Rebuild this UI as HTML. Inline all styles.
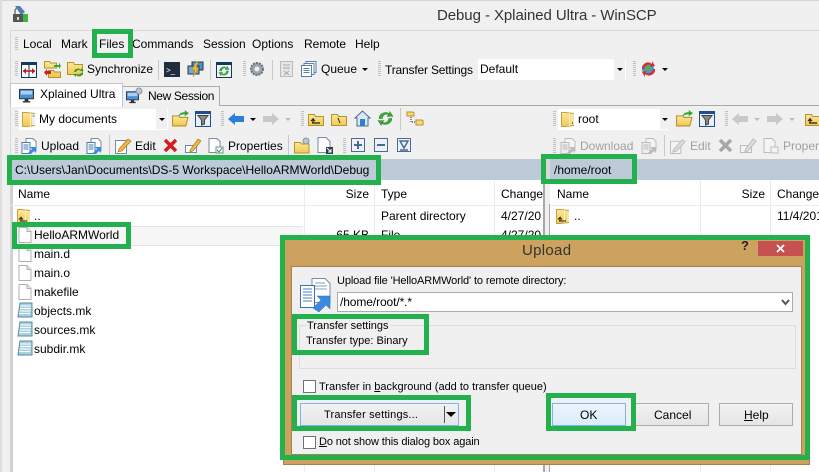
<!DOCTYPE html>
<html><head><meta charset="utf-8"><style>
html,body{margin:0;padding:0}
body{width:819px;height:472px;overflow:hidden;position:relative;background:#f0f0f0;font-family:"Liberation Sans",sans-serif;font-size:12px;color:#000}
.a{position:absolute}
.t{position:absolute;white-space:nowrap;line-height:14px;transform:translateY(-7px)}
.r{position:absolute;white-space:nowrap;line-height:14px;transform:translate(-100%,-7px)}
.s{font-size:11px}
.g{position:absolute;border:5px solid #22b14c;box-sizing:border-box}
svg.i{position:absolute;overflow:visible}
.d{color:#a0a0a0}
.v{position:absolute;width:1px;background:#e3edf6}
.grip{position:absolute;width:3px;background:repeating-linear-gradient(#c0c0c0 0 1px,#f0f0f0 1px 2px)}
.sep{position:absolute;width:1px;background:#c8c8c8}
u{text-decoration:underline}
</style></head><body>
<svg width="0" height="0" style="position:absolute"><defs>
<linearGradient id="yl" x1="0" y1="0" x2="0" y2="1"><stop offset="0" stop-color="#fbe89a"/><stop offset="1" stop-color="#f0c850"/></linearGradient>
<symbol id="fo" viewBox="0 0 16 16"><path d="M.5 3.500h6l1 2h8v9H.5z" fill="url(#yl)" stroke="#b8902c"/></symbol>
<symbol id="fu" viewBox="0 0 16 16"><path d="M.5 3.500h6l1 2h8v9H.5z" fill="url(#yl)" stroke="#b8902c"/><path d="M4 12h8M5 12V8l-2 2M5 8l2 2" fill="none" stroke="#222" stroke-width="1.200"/></symbol>
<symbol id="up" viewBox="0 0 14 16"><path d="M.5 1.500h4l8 1v12l-8 1h-4z" fill="url(#yl)" stroke="#c8a040"/><path d="M8.500 2v13" stroke="#fff4c0"/><path d="M11 3h2v11h-2z" fill="#f5e6a8"/><path d="M3 13h7M4 13V9.500l-2 2M4 9.500l2 2" stroke="#222" fill="none"/></symbol>
<symbol id="dc" viewBox="0 0 14 16"><path d="M.5 1.500h4l8 1v12l-8 1h-4z" fill="url(#yl)" stroke="#c8a040"/><path d="M8.500 2v13" stroke="#fff4c0"/><path d="M10 3h3v11h-3z" fill="#eeeef4"/><path d="M10.500 5h2" stroke="#3a7ac0"/></symbol>
<symbol id="rt" viewBox="0 0 14 16"><path d="M.5 1.500h4l8 1v12l-8 1h-4z" fill="url(#yl)" stroke="#c8a040"/><path d="M8.500 2v13" stroke="#fff4c0"/><path d="M10 3h3v11h-3z" fill="#f5e6a8"/><path d="M11 11h1v2h-1z" fill="#3a7ac0"/></symbol>
<symbol id="fi" viewBox="0 0 14 16"><path d="M1 .5h8l4 4v11H1z" fill="#fff" stroke="#b0b0b0"/><path d="M9 .5v4h4" fill="#e8e8e8" stroke="#b0b0b0"/></symbol>
<symbol id="mk" viewBox="0 0 16 16"><path d="M3 1h12v14H1z" fill="#a8d0e0" stroke="#5a8aa0"/><path d="M3 4h11M3 6.500h11M2.500 9h11M2 11.500h11" stroke="#fff"/></symbol>
<symbol id="mon" viewBox="0 0 16 16"><rect x=".5" y="1.500" width="15" height="10" fill="#4a90d8" stroke="#333"/><rect x="2" y="3" width="12" height="4" fill="#a8d0f0"/><path d="M4 14h8v1.500H4zM6 11.500h4V14H6z" fill="#333"/></symbol>
<symbol id="ub" viewBox="0 0 16 16"><path d="M5 .5h7l3 3v9H5z" fill="#fff" stroke="#7a8aa0"/><path d="M1 4.500h8v11H1z" fill="#fff" stroke="#4a7ab0"/><path d="M2.500 7h5M2.500 9h5M2.500 11h5" stroke="#4a7ab0"/><path d="M7 15l4-4-2-2h6v6l-2-2-4 4z" fill="#3a8ae0"/></symbol>
<symbol id="ubd" viewBox="0 0 16 16"><path d="M5 .5h7l3 3v9H5z" fill="#f4f4f4" stroke="#bbb"/><path d="M1 4.500h8v11H1z" fill="#eee" stroke="#bbb"/><path d="M2.500 7h5M2.500 9h5M2.500 11h5" stroke="#bbb"/><path d="M7 15l4-4-2-2h6v6l-2-2-4 4z" fill="#bbb"/></symbol>
<symbol id="oj" viewBox="0 0 16 16"><path d="M.5 5.500h6l1 1.500h7.500l-2 8H.5z" fill="url(#yl)" stroke="#b8902c"/><path d="M6 6c1-3 3-4 6-4V0l4 3-4 3V4c-2 0-4 .5-6 2z" fill="#3aa63a"/></symbol>
<symbol id="fl" viewBox="0 0 16 16"><rect x=".5" y=".5" width="15" height="15" fill="#eaf0f8" stroke="#1d4f91"/><rect x="1" y="1" width="14" height="2" fill="#1d4f91"/><path d="M3 4.500h10L9.500 9v4l-3 1V9z" fill="#888" stroke="#444"/></symbol>
<symbol id="re" viewBox="0 0 16 16"><path d="M2 8a6 6 0 0 1 10-4V1.500L15 6H9.500l1.500-1.500A4 4 0 0 0 5 8z" fill="#3cae3c" stroke="#1f7d1f" stroke-width=".5"/><path d="M14 8a6 6 0 0 1-10 4v2.500L1 10h5.500L5 11.500A4 4 0 0 0 11 8z" fill="#3cae3c" stroke="#1f7d1f" stroke-width=".5"/></symbol>
</defs></svg>

<!-- window chrome -->
<div class="a" style="left:0;top:0;width:819px;height:1px;background:#d4d4d4"></div>
<div class="a" style="left:0;top:0;width:2px;height:472px;background:#dedede"></div>
<div class="a" style="left:10px;top:30px;width:809px;height:1px;background:#d8d8d8"></div>
<div class="a" style="left:10px;top:31px;width:1px;height:441px;background:#d8d8d8"></div>
<svg class="i" style="left:12px;top:6px" width="17" height="17" viewBox="0 0 17 17"><path d="M3 0h5l5 6-4 3z" fill="#3a82d0"/><rect x="9" y="8" width="7" height="8" fill="#3eb54a"/><rect x="1" y="8" width="10" height="8" fill="#555"/><path d="M3 8V5a3 3 0 0 1 6 0v3" fill="none" stroke="#777" stroke-width="1.500"/><rect x="5" y="11" width="2" height="3" fill="#ddd"/></svg>
<div class="t" style="left:437px;top:16px;font-size:15px;color:#333;letter-spacing:-.07px">Debug - Xplained Ultra - WinSCP</div>

<!-- menu -->
<div class="grip" style="left:15px;top:37px;height:13px"></div>
<div class="t" style="left:23px;top:44px">Local</div>
<div class="t" style="left:61px;top:44px">Mark</div>
<div class="t" style="left:99px;top:44px">Files</div>
<div class="t" style="left:132px;top:44px">Commands</div>
<div class="t" style="left:203px;top:44px">Session</div>
<div class="t" style="left:252px;top:44px">Options</div>
<div class="t" style="left:304px;top:44px">Remote</div>
<div class="t" style="left:355px;top:44px">Help</div>

<!-- toolbar 1 -->
<div class="grip" style="left:15px;top:61px;height:16px"></div>
<svg class="i" style="left:21px;top:62px" width="16" height="16" viewBox="0 0 16 16"><rect x=".5" y=".5" width="15" height="15" fill="#f4f8fc" stroke="#17365d"/><rect x="1" y="1" width="14" height="2" fill="#17365d"/><path d="M8 1v14" stroke="#17365d"/><path d="M2 9h12" stroke="#c01818" stroke-width="1.500"/><path d="M2 9l3-3v6zM14 9l-3-3v6z" fill="#c01818"/></svg>
<svg class="i" style="left:44px;top:61px" width="17" height="17" viewBox="0 0 17 17"><path d="M.5 .5h5l1 1.500h6v5H.5zM4.500 9.500h5l1 1.500h6v5.500h-12z" fill="url(#yl)" stroke="#b8902c"/><path d="M10 4h5V1.500L17 5l-2 3V6h-5z" fill="#3aa63a"/><path d="M7 10H3V8L0 11.500 3 15v-2h4z" fill="#d02020"/></svg>
<svg class="i" style="left:67px;top:61px" width="17" height="17" viewBox="0 0 17 17"><path d="M.5 1.500h6l1 2h8v10H.5z" fill="url(#yl)" stroke="#b8902c"/><path d="M7 11a4 4 0 0 1 7-2V7l3 3h-5l1.500-.5A3 3 0 0 0 9 11z" fill="#2e9e2e"/><path d="M16 12a4 4 0 0 1-7 2v2l-3-3h5l-1.500.5A3 3 0 0 0 14 12z" fill="#2e9e2e"/></svg>
<div class="t" style="left:87px;top:69px">Synchronize</div>
<div class="sep" style="left:158px;top:60px;height:20px"></div>
<div class="a" style="left:164px;top:62px;width:16px;height:15px;background:#1f2d3d"></div>
<div class="t" style="left:166px;top:71px;color:#fff;font-size:8px">&gt;_</div>
<svg class="i" style="left:187px;top:61px" width="17" height="17" viewBox="0 0 17 17"><rect x="5" y="1" width="11" height="8" fill="#4a90d8" stroke="#333"/><rect x="1" y="5" width="11" height="8" fill="#6aa8e0" stroke="#333"/><path d="M9 1L5 9h3l-2 7 6-9H9l2-6z" fill="#f0c020" stroke="#a07810" stroke-width=".4"/></svg>
<div class="sep" style="left:210px;top:60px;height:20px"></div>
<svg class="i" style="left:216px;top:62px" width="16" height="16" viewBox="0 0 16 16"><rect x=".5" y=".5" width="15" height="15" fill="#eef4fa" stroke="#17365d"/><rect x="1" y="1" width="14" height="2" fill="#17365d"/><use href="#re" x="2" y="3" width="12" height="12"/></svg>
<div class="grip" style="left:243px;top:61px;height:16px"></div>
<svg class="i" style="left:249px;top:61px" width="16" height="16" viewBox="0 0 16 16"><circle cx="8" cy="8" r="6" fill="#9aa4ae" stroke="#6a7480" stroke-width="2" stroke-dasharray="2 1"/><circle cx="8" cy="8" r="2.500" fill="#eee"/></svg>
<div class="sep" style="left:272px;top:60px;height:20px"></div>
<svg class="i" style="left:280px;top:61px" width="13" height="16" viewBox="0 0 13 16"><path d="M.5.5h12v15H.5z" fill="#e6e6e6" stroke="#bbb"/><path d="M3 4h7M3 7h7M4 10l5 4M9 10l-5 4" stroke="#aaa"/></svg>
<svg class="i" style="left:301px;top:61px" width="16" height="16" viewBox="0 0 16 16"><path d="M5 .5h10v11H5z" fill="#fff" stroke="#5a7ea8"/><path d="M3 2.500h10v11H3z" fill="#fff" stroke="#5a7ea8"/><path d="M.5 4.500h10v11H.5z" fill="#fff" stroke="#5a7ea8"/><path d="M2.500 7.500h6M2.500 9.500h6M2.500 11.500h6" stroke="#5a7ea8"/></svg>
<div class="t" style="left:321px;top:69px">Queue</div>
<div class="a" style="left:362px;top:68px;border:3px solid transparent;border-top:3px solid #000"></div>
<div class="grip" style="left:378px;top:61px;height:16px"></div>
<div class="t" style="left:385px;top:70px;letter-spacing:-.18px">Transfer Settings</div>
<div class="a" style="left:478px;top:59px;width:148px;height:21px;background:#fff"></div>
<div class="a" style="left:614px;top:59px;width:11px;height:21px;background:#f0f0f0"></div>
<div class="t" style="left:480px;top:69px">Default</div>
<div class="a" style="left:617px;top:68px;border:3px solid transparent;border-top:3px solid #000"></div>
<div class="grip" style="left:633px;top:61px;height:16px"></div>
<svg class="i" style="left:640px;top:60px" width="17" height="18" viewBox="0 0 17 18"><circle cx="8" cy="9" r="6" fill="#3f9ad6"/><path d="M5 6l5-1 1 4-5 3z" fill="#4fb04f"/><path d="M2 9a6 6 0 0 1 10-5V1l3 5-5 1 1-2A5 5 0 0 0 4 9z" fill="#d82a2a"/><path d="M15 9a6 6 0 0 1-10 5v3l-3-5 5-1-1 2a5 5 0 0 0 7-4z" fill="#d82a2a"/></svg>
<div class="a" style="left:662px;top:68px;border:3px solid transparent;border-top:3px solid #000"></div>

<!-- tabs -->
<div class="a" style="left:11px;top:105px;width:808px;height:1px;background:#a8a8a8"></div>
<div class="a" style="left:121px;top:86px;width:97px;height:19px;background:#f0f0f0;border:1px solid #adadad;border-bottom:0"></div>
<div class="a" style="left:10px;top:83px;width:111px;height:23px;background:#fff;border:1px solid #c4c4c4;border-bottom:0"></div>
<svg class="i" style="left:19px;top:88px" width="15" height="15"><use href="#mon" width="15" height="15"/></svg>
<div class="t" style="left:40px;top:94px">Xplained Ultra</div>
<svg class="i" style="left:126px;top:87px" width="17" height="17" viewBox="0 0 17 17"><use href="#mon" y="3" width="13" height="14"/><circle cx="13" cy="4" r="3" fill="#bcc6d0" stroke="#8a94a0"/></svg>
<div class="t" style="left:148px;top:96px;letter-spacing:-.36px">New Session</div>

<!-- local toolbar -->
<div class="grip" style="left:15px;top:111px;height:16px"></div>
<div class="a" style="left:19px;top:109px;width:149px;height:21px;background:#fff"></div>
<div class="a" style="left:156px;top:109px;width:11px;height:20px;background:#f0f0f0"></div>
<svg class="i" style="left:22px;top:111px" width="14" height="16"><use href="#dc" width="14" height="16"/></svg>
<div class="t" style="left:39px;top:119px">My documents</div>
<div class="a" style="left:159px;top:118px;border:3px solid transparent;border-top:3px solid #000"></div>
<svg class="i" style="left:172px;top:110px" width="17" height="17"><use href="#oj" width="17" height="17"/></svg>
<svg class="i" style="left:195px;top:111px" width="16" height="16"><use href="#fl" width="16" height="16"/></svg>
<div class="grip" style="left:221px;top:111px;height:16px"></div>
<svg class="i" style="left:228px;top:113px" width="16" height="12" viewBox="0 0 16 12"><path d="M0 6l7-6v3h9v6H7v3z" fill="#2a7fd8"/></svg>
<div class="a" style="left:250px;top:118px;border:3px solid transparent;border-top:3px solid #000"></div>
<svg class="i" style="left:263px;top:113px" width="16" height="12" viewBox="0 0 16 12"><path d="M16 6L9 0v3H0v6h9v3z" fill="#c8c8c8"/></svg>
<div class="a" style="left:285px;top:118px;border:3px solid transparent;border-top:3px solid #bbb"></div>
<div class="grip" style="left:301px;top:111px;height:16px"></div>
<svg class="i" style="left:308px;top:111px" width="16" height="16"><use href="#fu" width="16" height="16"/></svg>
<svg class="i" style="left:331px;top:111px" width="16" height="16" viewBox="0 0 16 16"><use href="#fo" width="16" height="16"/><path d="M7 7l2 5" stroke="#222"/></svg>
<svg class="i" style="left:354px;top:110px" width="17" height="17" viewBox="0 0 17 17"><path d="M8.500 1L1 8h2v8h11V8h2z" fill="#dce8f4" stroke="#4a6a90"/><rect x="6" y="9" width="5" height="7" fill="#2a7fd8"/></svg>
<svg class="i" style="left:377px;top:110px" width="17" height="17"><use href="#re" width="17" height="17"/></svg>
<div class="sep" style="left:400px;top:108px;height:22px"></div>
<svg class="i" style="left:406px;top:111px" width="18" height="16" viewBox="0 0 18 16"><path d="M1 1h6l1 1v3H1zM10 9h6l1 1v4h-7z" fill="#f5d878" stroke="#b8902c"/><path d="M5 6v5h4" stroke="#222" stroke-dasharray="1 1" fill="none"/></svg>

<div class="grip" style="left:15px;top:138px;height:16px"></div>
<svg class="i" style="left:21px;top:138px" width="16" height="16"><use href="#ub" width="16" height="16"/></svg>
<div class="t" style="left:41px;top:146px">Upload</div>
<svg class="i" style="left:86px;top:138px" width="16" height="16"><use href="#ub" width="16" height="16"/></svg>
<div class="sep" style="left:109px;top:135px;height:21px"></div>
<svg class="i" style="left:115px;top:137px" width="17" height="17" viewBox="0 0 17 17"><path d="M.5 3.500h11v13H.5z" fill="#fff" stroke="#6a8ab0"/><path d="M4 12L13 2l3 2-9 10-4 1z" fill="#f0b840" stroke="#a06810" stroke-width=".6"/></svg>
<div class="t" style="left:135px;top:146px">Edit</div>
<svg class="i" style="left:163px;top:138px" width="15" height="15" viewBox="0 0 15 15"><path d="M2 2l11 11M13 2L2 13" stroke="#d41c1c" stroke-width="3.500"/></svg>
<svg class="i" style="left:185px;top:137px" width="17" height="17" viewBox="0 0 17 17"><rect x=".5" y="8.500" width="11" height="7" fill="#fff" stroke="#6a8ab0"/><path d="M5 13L13 2l3 2-8 10-3 1z" fill="#f0b840" stroke="#a06810" stroke-width=".6"/></svg>
<svg class="i" style="left:208px;top:138px" width="16" height="16" viewBox="0 0 16 16"><path d="M1 .5h8l3 3v11H1z" fill="#fff" stroke="#7a8aa0"/><rect x="8" y="9" width="7" height="6" fill="#fff" stroke="#7a8aa0"/><path d="M9 12l2 2 3-4" stroke="#2a9a2a" fill="none"/></svg>
<div class="t" style="left:228px;top:146px">Properties</div>
<div class="sep" style="left:288px;top:135px;height:21px"></div>
<svg class="i" style="left:294px;top:137px" width="16" height="17" viewBox="0 0 16 17"><path d="M.5 5.500h6l1 1.500h7.500v9H.5z" fill="url(#yl)" stroke="#b8902c"/><circle cx="12" cy="4" r="3" fill="#bcc6d0" stroke="#8a94a0"/></svg>
<svg class="i" style="left:317px;top:137px" width="16" height="17" viewBox="0 0 16 17"><path d="M1 .5h8l4 4v11H1z" fill="#fff" stroke="#7a8aa0"/><rect x="9" y="10" width="7" height="7" fill="#2c3e50"/><path d="M10 11l4 4M14 12v3h-3" stroke="#fff" fill="none"/></svg>
<div class="grip" style="left:343px;top:138px;height:16px"></div>
<svg class="i" style="left:351px;top:138px" width="14" height="14" viewBox="0 0 14 14"><rect x=".5" y=".5" width="13" height="13" fill="#eef2f8" stroke="#4a6a90"/><path d="M3 7h8M7 3v8" stroke="#4a6a90" stroke-width="2"/></svg>
<svg class="i" style="left:374px;top:138px" width="14" height="14" viewBox="0 0 14 14"><rect x=".5" y=".5" width="13" height="13" fill="#eef2f8" stroke="#4a6a90"/><path d="M3 7h8" stroke="#4a6a90" stroke-width="2"/></svg>
<svg class="i" style="left:397px;top:138px" width="14" height="14" viewBox="0 0 14 14"><rect x=".5" y=".5" width="13" height="13" fill="#eef2f8" stroke="#4a6a90"/><path d="M3 3h8L7 10zM3 12h8" fill="none" stroke="#4a6a90" stroke-width="1.500"/></svg>

<!-- remote toolbar -->
<div class="grip" style="left:553px;top:111px;height:16px"></div>
<div class="a" style="left:558px;top:109px;width:110px;height:21px;background:#fff"></div>
<div class="a" style="left:660px;top:109px;width:8px;height:20px;background:#f0f0f0"></div>
<svg class="i" style="left:561px;top:111px" width="14" height="16"><use href="#rt" width="14" height="16"/></svg>
<div class="t" style="left:578px;top:119px">root</div>
<div class="a" style="left:662px;top:118px;border:3px solid transparent;border-top:3px solid #000"></div>
<svg class="i" style="left:676px;top:110px" width="17" height="17"><use href="#oj" width="17" height="17"/></svg>
<svg class="i" style="left:699px;top:111px" width="16" height="16"><use href="#fl" width="16" height="16"/></svg>
<div class="grip" style="left:725px;top:111px;height:16px"></div>
<svg class="i" style="left:732px;top:113px" width="16" height="12" viewBox="0 0 16 12"><path d="M0 6l7-6v3h9v6H7v3z" fill="#c8c8c8"/></svg>
<div class="a" style="left:754px;top:118px;border:3px solid transparent;border-top:3px solid #bbb"></div>
<svg class="i" style="left:767px;top:113px" width="16" height="12" viewBox="0 0 16 12"><path d="M16 6L9 0v3H0v6h9v3z" fill="#c8c8c8"/></svg>
<div class="a" style="left:789px;top:118px;border:3px solid transparent;border-top:3px solid #bbb"></div>
<svg class="i" style="left:805px;top:111px" width="16" height="16"><use href="#fu" width="16" height="16"/></svg>

<div class="grip" style="left:553px;top:138px;height:16px"></div>
<svg class="i" style="left:560px;top:138px" width="16" height="16"><use href="#ubd" width="16" height="16"/></svg>
<div class="t d" style="left:580px;top:146px">Download</div>
<svg class="i" style="left:641px;top:138px" width="16" height="16"><use href="#ubd" width="16" height="16"/></svg>
<div class="sep" style="left:664px;top:135px;height:21px"></div>
<svg class="i" style="left:670px;top:138px" width="16" height="16" viewBox="0 0 17 17"><path d="M.5 3.500h11v13H.5z" fill="#f4f4f4" stroke="#bbb"/><path d="M4 12L13 2l3 2-9 10-4 1z" fill="#ddd" stroke="#bbb"/></svg>
<div class="t d" style="left:690px;top:146px">Edit</div>
<svg class="i" style="left:718px;top:138px" width="15" height="15" viewBox="0 0 15 15"><path d="M2 2l11 11M13 2L2 13" stroke="#a8a8a8" stroke-width="3.500"/></svg>
<svg class="i" style="left:740px;top:137px" width="17" height="17" viewBox="0 0 17 17"><rect x=".5" y="8.500" width="11" height="7" fill="#f4f4f4" stroke="#bbb"/><path d="M5 13L13 2l3 2-8 10-3 1z" fill="#ddd" stroke="#bbb"/></svg>
<svg class="i" style="left:763px;top:138px" width="16" height="16" viewBox="0 0 16 16"><path d="M1 .5h8l3 3v11H1z" fill="#f4f4f4" stroke="#bbb"/><rect x="8" y="9" width="7" height="6" fill="#f4f4f4" stroke="#bbb"/></svg>
<div class="t d" style="left:783px;top:146px">Properties</div>

<!-- path bars -->
<div class="a" style="left:11px;top:159px;width:808px;height:21px;background:#bdcbd9"></div>
<div class="a" style="left:543px;top:159px;width:7px;height:21px;background:#d8d8d8"></div>
<div class="t" style="left:15px;top:170px;letter-spacing:0">C:\Users\Jan\Documents\DS-5 Workspace\HelloARMWorld\Debug</div>
<div class="t" style="left:554px;top:170px">/home/root</div>

<!-- panels -->
<div class="a" style="left:11px;top:180px;width:532px;height:292px;background:#fff"></div>
<div class="a" style="left:550px;top:180px;width:269px;height:292px;background:#fff"></div>
<div class="a" style="left:543px;top:180px;width:2px;height:292px;background:#a8a8a8"></div>
<div class="a" style="left:545px;top:180px;width:4px;height:292px;background:#f0f0f0"></div>
<div class="a" style="left:549px;top:180px;width:1px;height:292px;background:#a8a8a8"></div>
<div class="a" style="left:11px;top:180px;width:2px;height:292px;background:#d0d0d0"></div>
<div class="a" style="left:11px;top:205px;width:532px;height:1px;background:#e3edf6"></div>
<div class="a" style="left:550px;top:205px;width:269px;height:1px;background:#e3edf6"></div>
<div class="v" style="left:304px;top:180px;height:292px"></div>
<div class="v" style="left:374px;top:180px;height:292px"></div>
<div class="v" style="left:494px;top:180px;height:292px"></div>
<div class="v" style="left:700px;top:180px;height:292px"></div>
<div class="v" style="left:770px;top:180px;height:292px"></div>
<div class="a" style="left:567px;top:181px;border:4px solid transparent;border-bottom:3px solid #9fc0dc;border-top:0"></div>
<div class="a" style="left:154px;top:181px;border:4px solid transparent;border-bottom:3px solid #9fc0dc;border-top:0"></div>

<div class="t" style="left:18px;top:194px">Name</div>
<div class="r" style="left:369px;top:194px">Size</div>
<div class="t" style="left:381px;top:194px">Type</div>
<div class="t" style="left:501px;top:194px">Changed</div>
<div class="a" style="left:543px;top:181px;width:7px;height:23px;background:#f0f0f0"></div>
<div class="a" style="left:543px;top:180px;width:2px;height:25px;background:#a8a8a8"></div>
<div class="t" style="left:557px;top:194px">Name</div>
<div class="r" style="left:765px;top:194px">Size</div>
<div class="t" style="left:777px;top:194px">Changed</div>

<!-- left rows -->
<div class="a" style="left:17px;top:226px;width:286px;height:18px;background:#f6f6f6;border-top:1px solid #e4e4e4;border-bottom:1px solid #e4e4e4"></div>
<svg class="i" style="left:17px;top:208px" width="14" height="16"><use href="#up" width="14" height="16"/></svg>
<div class="t" style="left:34px;top:216px">..</div>
<svg class="i" style="left:18px;top:227px" width="14" height="16"><use href="#fi" width="14" height="16"/></svg>
<div class="t" style="left:34px;top:235px">HelloARMWorld</div>
<svg class="i" style="left:18px;top:246px" width="14" height="16"><use href="#fi" width="14" height="16"/></svg>
<div class="t" style="left:34px;top:254px">main.d</div>
<svg class="i" style="left:18px;top:265px" width="14" height="16"><use href="#fi" width="14" height="16"/></svg>
<div class="t" style="left:34px;top:273px">main.o</div>
<svg class="i" style="left:18px;top:284px" width="14" height="16"><use href="#fi" width="14" height="16"/></svg>
<div class="t" style="left:34px;top:292px">makefile</div>
<svg class="i" style="left:17px;top:302px" width="16" height="16"><use href="#mk" width="16" height="16"/></svg>
<div class="t" style="left:34px;top:311px">objects.mk</div>
<svg class="i" style="left:17px;top:321px" width="16" height="16"><use href="#mk" width="16" height="16"/></svg>
<div class="t" style="left:34px;top:330px">sources.mk</div>
<svg class="i" style="left:17px;top:340px" width="16" height="16"><use href="#mk" width="16" height="16"/></svg>
<div class="t" style="left:34px;top:349px">subdir.mk</div>

<div class="t" style="left:381px;top:216px">Parent directory</div>
<div class="t" style="left:501px;top:216px">4/27/20</div>
<div class="r" style="left:369px;top:235px">65 KB</div>
<div class="t" style="left:381px;top:235px">File</div>
<div class="t" style="left:501px;top:235px">4/27/20</div>

<svg class="i" style="left:556px;top:208px" width="14" height="16"><use href="#up" width="14" height="16"/></svg>
<div class="t" style="left:574px;top:216px">..</div>
<div class="t" style="left:777px;top:216px">11/4/201</div>

<!-- dialog -->
<div class="a" style="left:283px;top:238px;width:527px;height:227px;background:#cda25f;border:1px solid #a88050;box-sizing:border-box"></div>
<div class="a" style="left:291px;top:266px;width:511px;height:189px;background:#f0f0f0;border:1px solid #a88050;box-sizing:border-box"></div>
<div class="a" style="left:758px;top:241px;width:45px;height:15px;background:#c75050"></div>
<svg class="i" style="left:776px;top:244px" width="9" height="9" viewBox="0 0 9 9"><path d="M1 1l7 7M8 1L1 8" stroke="#fff" stroke-width="1.800"/></svg>
<div class="t" style="left:741px;top:246px;font-weight:bold;font-size:13px;color:#222">?</div>
<div class="t" style="left:522px;top:251px;font-size:15px;color:#333;letter-spacing:.3px">Upload</div>

<svg class="i" style="left:300px;top:278px" width="31" height="31" viewBox="0 0 31 31"><path d="M12 .5h13l5 5v19H12z" fill="#fff" stroke="#7a8ca8"/><path d="M15 5h10M15 8h12M15 11h12" stroke="#8aa0c0"/><path d="M.5 7.500h14v22H.5z" fill="#fff" stroke="#3a70b0"/><path d="M3 11h9M3 14h9M3 17h9M3 20h9M3 23h9" stroke="#4a80c0"/><path d="M13 30l8-8-4-4h13v13l-4-4-7 7z" fill="#3a8ae0" stroke="#2a68b0" stroke-width=".5"/></svg>
<div class="t s" style="left:337px;top:281px;letter-spacing:-.12px">Upload file 'HelloARMWorld' to remote directory:</div>
<div class="a" style="left:337px;top:292px;width:456px;height:20px;background:#fff;border:1px solid #ababab;box-sizing:border-box"></div>
<div class="t" style="left:340px;top:302px;letter-spacing:-.1px">/home/root/*.*</div>
<svg class="i" style="left:781px;top:299px" width="9" height="7" viewBox="0 0 9 7"><path d="M1 1l3.500 4L8 1" fill="none" stroke="#555" stroke-width="2"/></svg>

<div class="a" style="left:299px;top:325px;width:497px;height:44px;border:1px solid #dcdcdc;box-sizing:border-box"></div>
<div class="t s" style="left:307px;top:326px;background:#f0f0f0;padding-right:2px">Transfer settings</div>
<div class="t s" style="left:306px;top:341px">Transfer type: Binary</div>

<div class="a" style="left:303px;top:380px;width:13px;height:13px;background:#fff;border:1px solid #707070;box-sizing:border-box"></div>
<div class="t s" style="left:319px;top:387px">Transfer in <u>b</u>ackground (add to transfer queue)</div>

<div class="a" style="left:300px;top:403px;width:159px;height:23px;background:linear-gradient(#f2f2f2,#e5e5e5);border:1px solid #7eb4ea;box-sizing:border-box"></div>
<div class="t s" style="left:324px;top:415px;letter-spacing:.17px">Transfer settings...</div>
<div class="a" style="left:444px;top:406px;width:1px;height:17px;background:#555"></div>
<div class="a" style="left:446px;top:412px;border:5px solid transparent;border-top:5px solid #000"></div>

<div class="a" style="left:303px;top:436px;width:13px;height:13px;background:#fff;border:1px solid #707070;box-sizing:border-box"></div>
<div class="t s" style="left:319px;top:442px;letter-spacing:-.12px"><u>D</u>o not show this dialog box again</div>

<div class="a" style="left:552px;top:403px;width:74px;height:23px;background:linear-gradient(#ecf4fc,#dcecfc);border:1px solid #7eb4ea;box-sizing:border-box"></div>
<div class="t" style="left:580px;top:415px">OK</div>
<div class="a" style="left:635px;top:403px;width:74px;height:23px;background:linear-gradient(#f2f2f2,#e5e5e5);border:1px solid #adadad;box-sizing:border-box"></div>
<div class="t" style="left:654px;top:415px">Cancel</div>
<div class="a" style="left:719px;top:403px;width:74px;height:23px;background:linear-gradient(#f2f2f2,#e5e5e5);border:1px solid #adadad;box-sizing:border-box"></div>
<div class="t" style="left:744px;top:415px"><u>H</u>elp</div>

<!-- green highlights -->
<div class="g" style="left:92px;top:29px;width:41px;height:29px"></div>
<div class="g" style="left:7px;top:155px;width:374px;height:30px"></div>
<div class="g" style="left:541px;top:154px;width:96px;height:30px"></div>
<div class="g" style="left:12px;top:222px;width:119px;height:27px"></div>
<div class="g" style="left:280px;top:235px;width:530px;height:225px"></div>
<div class="g" style="left:292px;top:314px;width:137px;height:41px"></div>
<div class="g" style="left:292px;top:395px;width:179px;height:36px"></div>
<div class="g" style="left:546px;top:393px;width:90px;height:38px"></div>
</body></html>
